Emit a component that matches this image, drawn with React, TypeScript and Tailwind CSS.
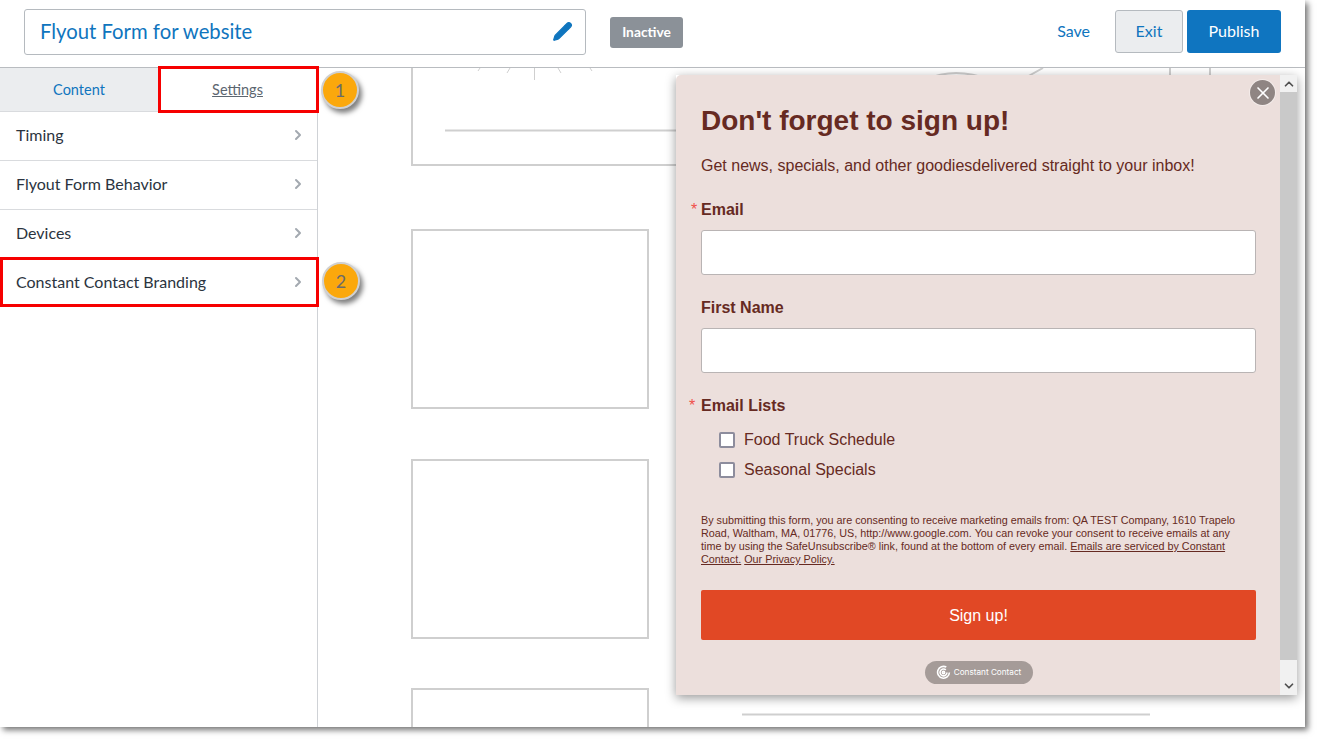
import { ChevronRight, ChevronUp, ChevronDown, Pencil, X } from 'lucide-react'

const rows = ['Timing', 'Flyout Form Behavior', 'Devices', 'Constant Contact Branding']

function Wireframe() {
  // background page preview, only line art
  return (
    <svg className="absolute left-0 top-0" width="987" height="659" viewBox="318 68 987 659" fill="none" stroke="#cfcfcf">
      <path d="M412 68V165H1210V68" strokeWidth="2" />
      <path d="M1170 68V130" strokeWidth="2" />
      <path d="M445 130.500H1170" strokeWidth="2" />
      <path d="M534.500 68V80M510 68L507 73M558 68L561 73M480 68L478 71M590 68L592 71" strokeWidth="1" />
      <path d="M925 80Q955 66 990 80M1043 68L1025 78" strokeWidth="2" />
      <rect x="412" y="230" width="236" height="178" strokeWidth="2" />
      <rect x="412" y="460" width="236" height="178" strokeWidth="2" />
      <path d="M412 727V689H648V727" strokeWidth="2" />
      <path d="M742 714.500H1150" strokeWidth="2" />
    </svg>
  )
}

function Field({ label, required }: { label: string; required?: boolean }) {
  return (
    <div>
      <label className="relative block h-[21px] text-[16px] leading-[21px] font-bold text-[#662a22]">
        {required && <span className="absolute -left-[10px] top-0 font-normal text-[#f0504a]">*</span>}
        {label}
      </label>
      <div className="mt-[10px] h-[45px] rounded-[3px] border border-[#b9b4b4] bg-white" />
    </div>
  )
}

function Flyout() {
  return (
    <div className="absolute left-[676px] top-[7px] flex h-[620px] w-[621px] shadow-[0_3px_10px_rgba(0,0,0,0.4)]">
      <div className="relative w-[604px] rounded-tl-[5px] bg-[#ecdfdc] px-[25px] font-['Liberation_Sans',sans-serif] text-[#662a22]">
        <button className="absolute right-[5px] top-[5px] flex h-[25px] w-[25px] items-center justify-center rounded-full bg-[#8f8583] text-white ring-1 ring-white/40">
          <X className="h-[20px] w-[20px]" strokeWidth={2} />
        </button>
        <h1 className="mt-[29px] h-[34px] text-[28px] leading-[34px] font-bold">Don't forget to sign up!</h1>
        <p className="mt-[18px] h-[20px] text-[16px] leading-[20px]">Get news, specials, and other goodiesdelivered straight to your inbox!</p>
        <div className="mt-[23px] w-[555px]">
          <Field label="Email" required />
        </div>
        <div className="mt-[22px] w-[555px]">
          <Field label="First Name" />
        </div>
        <div className="relative mt-[22px] h-[21px] text-[16px] leading-[21px] font-bold">
          <span className="absolute -left-[12px] top-0 font-normal text-[#f0504a]">*</span>
          Email Lists
        </div>
        <div className="mt-[14px] flex flex-col gap-[10px] pl-[18px]">
          {['Food Truck Schedule', 'Seasonal Specials'].map((item) => (
            <div key={item} className="flex h-[20px] items-center gap-[9px] text-[16px]">
              <span className="h-[16px] w-[16px] rounded-[2px] border-2 border-[#8d8d9d] bg-white" />
              {item}
            </div>
          ))}
        </div>
        <p className="mt-[34px] w-[540px] text-[10.800px] leading-[13px]">
          By submitting this form, you are consenting to receive marketing emails from: QA TEST Company, 1610 Trapelo Road, Waltham, MA, 01776, US, http://www.google.com. You can revoke your consent to receive emails at any time by using the SafeUnsubscribe® link, found at the bottom of every email. <span className="underline">Emails are serviced by Constant Contact.</span> <span className="underline">Our Privacy Policy.</span>
        </p>
        <button className="mt-[24px] h-[50px] w-[555px] rounded-[2px] bg-[#e14825] pt-[2px] text-[16px] text-white">Sign up!</button>
        <div className="mt-[21px] flex justify-center pl-[1px]">
          <div className="flex h-[23px] w-[108px] items-center justify-center gap-[3px] rounded-full bg-[#a59b98] text-white">
            <svg width="15" height="15" viewBox="0 0 16 16" fill="none" stroke="white" strokeWidth="1.700">
              <path d="M11 2.200A6.300 6.300 0 1 0 14.300 8" />
              <path d="M10.500 5.200A3.700 3.700 0 1 0 11.700 8" />
              <circle cx="8" cy="8" r="1.200" />
            </svg>
            <span className="font-['Inter',sans-serif] text-[8.200px] leading-none">Constant Contact</span>
          </div>
        </div>
      </div>
      <div className="flex w-[17px] flex-col bg-[#f1f1f1] text-[#505050]">
        <div className="flex h-[17px] items-center justify-center">
          <ChevronUp className="h-[14px] w-[14px]" strokeWidth={3} />
        </div>
        <div className="h-[568px] bg-[#c9c9c9]" />
        <div className="flex h-[35px] items-end justify-center pb-[2px]">
          <ChevronDown className="h-[14px] w-[14px]" strokeWidth={3} />
        </div>
      </div>
    </div>
  )
}

function Callout({ n, className }: { n: number; className: string }) {
  return (
    <div className={`absolute flex h-[38px] w-[38px] items-center justify-center rounded-full border-2 border-[#d0d0d0] bg-[#fba80c] text-[18px] text-[#6b6b6b] shadow-[3px_4px_5px_rgba(0,0,0,0.5)] ${className}`}>
      {n}
    </div>
  )
}

export default function App() {
  return (
    <div className="h-[742px] w-[1320px] overflow-hidden bg-white font-['Lato',sans-serif]">
      <div className="relative flex h-[727px] w-[1305px] flex-col bg-white shadow-[3px_3px_6px_rgba(0,0,0,0.55)]">
        <header className="flex h-[68px] shrink-0 items-center border-b border-[#b9bcc0] pl-[24px] pb-[4px]">
          <div className="flex h-[46px] w-[562px] items-center justify-between rounded-[3px] border border-[#b5babf] pl-[15px] pr-[12px]">
            <span className="text-[20.300px] text-[#0f75be]">Flyout Form for website</span>
            <Pencil className="h-[21px] w-[21px] fill-[#0f75be] text-[#0f75be]" strokeWidth={1.500} />
          </div>
          <span className="ml-[24px] mt-[2px] flex h-[31px] w-[73px] items-center justify-center rounded-[3px] bg-[#8b9198] text-[13.800px] font-bold text-white">Inactive</span>
          <span className="ml-auto pb-[2px] text-[16px] text-[#0f75be]">Save</span>
          <button className="ml-[25px] h-[43px] w-[68px] rounded-[3px] border border-[#b5babf] bg-[#ebedef] pb-[2px] text-[16px] text-[#0f75be]">Exit</button>
          <button className="ml-[4px] mr-[24px] h-[43px] w-[94px] rounded-[3px] bg-[#0f75c0] pb-[2px] text-[16px] text-white">Publish</button>
        </header>
        <div className="relative flex min-h-0 flex-1">
          <aside className="w-[318px] shrink-0 border-r border-[#cfd2d6] bg-white">
            <div className="flex h-[44px] border-b border-[#d9dbde] text-[14.500px]">
              <div className="flex w-[158px] items-center justify-center bg-[#ebedef] text-[#0f75be]">Content</div>
              <div className="flex flex-1 items-center justify-center text-[#5c6670] underline">Settings</div>
            </div>
            {rows.map((row) => (
              <div key={row} className="flex h-[49px] items-center justify-between border-b border-[#d9dbde] pb-[2px] pl-[16px] pr-[11px] text-[16px] text-[#2b3440] last:border-b-0 last:pb-[3px]">
                {row}
                <ChevronRight className="h-[16px] w-[16px] text-[#a3a9b0]" strokeWidth={3} />
              </div>
            ))}
          </aside>
          <main className="relative flex-1 overflow-hidden">
            <Wireframe />
          </main>
          <Flyout />
          <div className="absolute left-[158px] -top-[2px] h-[47px] w-[161px] border-[3px] border-[#f60000]" />
          <div className="absolute left-0 top-[189px] h-[50px] w-[319px] border-[3px] border-[#f60000]" />
          <Callout n={1} className="left-[321px] top-[3px]" />
          <Callout n={2} className="left-[322px] top-[194px]" />
        </div>
      </div>
    </div>
  )
}
